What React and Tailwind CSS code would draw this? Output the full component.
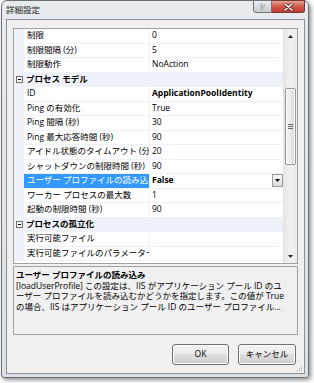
import React from "react";

const rows = [
  { name: "制限", value: "0" },
  { name: "制限間隔 (分)", value: "5" },
  { name: "制限動作", value: "NoAction" },
  { cat: "プロセス モデル" },
  { name: "ID", value: "ApplicationPoolIdentity", bold: true },
  { name: "Ping の有効化", value: "True" },
  { name: "Ping 間隔 (秒)", value: "30" },
  { name: "Ping 最大応答時間 (秒)", value: "90" },
  { name: "アイドル状態のタイムアウト (分)", value: "20" },
  { name: "シャットダウンの制限時間 (秒)", value: "90" },
  { name: "ユーザー プロファイルの読み込み", value: "False", bold: true, selected: true },
  { name: "ワーカー プロセスの最大数", value: "1" },
  { name: "起動の制限時間 (秒)", value: "90" },
  { cat: "プロセスの孤立化" },
  { name: "実行可能ファイル", value: "" },
  { name: "実行可能ファイルのパラメーター", value: "" },
];

function Minus() {
  return (
    <svg width="7" height="7" viewBox="0 0 7 7" className="block">
      <rect x="0.5" y="0.5" width="6" height="6" fill="#ffffff" stroke="#6f6f6f" />
      <line x1="2" y1="3.5" x2="5" y2="3.5" stroke="#000" />
    </svg>
  );
}

function Row({ r }) {
  if (r.cat) {
    return (
      <div className="h-[14.5px] flex items-center bg-[#eef1f7]">
        <div className="w-[10px] pl-[2px] flex items-center">
          <Minus />
        </div>
        <div className="pl-[2px] font-bold whitespace-nowrap">{r.cat}</div>
      </div>
    );
  }
  return (
    <div className="h-[14.5px] flex">
      <div className="w-[10px] bg-[#eef1f7]" />
      <div
        className={
          r.selected
            ? "w-[126px] border-r border-b border-[#eef1f7] bg-[#3399ff] text-white pl-[3px] flex items-center overflow-hidden whitespace-nowrap"
            : "w-[126px] border-r border-b border-[#eef1f7] pl-[3px] flex items-center overflow-hidden whitespace-nowrap"
        }
      >
        {r.name}
      </div>
      <div className="flex-1 border-b border-[#eef1f7] pl-[2px] flex items-center whitespace-nowrap overflow-hidden">
        <span className={r.bold ? "font-bold flex-1" : "flex-1"}>{r.value}</span>
        {r.selected && (
          <div className="w-[11px] h-[13px] border border-[#9b9b9b] bg-gradient-to-b from-[#f6f6f6] to-[#dcdcdc] flex items-center justify-center">
            <svg width="5" height="3" viewBox="0 0 5 3" className="block">
              <path d="M0 0 H5 L2.5 3 Z" fill="#000" />
            </svg>
          </div>
        )}
      </div>
    </div>
  );
}

export default function App() {
  return (
    <div className="w-[314px] h-[383px] bg-white overflow-hidden font-['Open_Sans','Noto_Sans_CJK_JP',sans-serif] text-[8.5px] text-black">
      <div className="ml-[1px] w-[308px] h-[378px] flex flex-col border border-[#6c6f74] rounded-t-[6px] rounded-b-[3px] bg-gradient-to-b from-[#e7eaee] to-[#dde0e5] shadow-[2px_2px_4px_rgba(0,0,0,0.45)]">
        {/* Title bar */}
        <div className="h-[18px] shrink-0 flex items-start">
          <div className="h-full pl-[4px] flex items-center text-[#222]">詳細設定</div>
          <div className="flex-1" />
          <div className="flex -mt-[1px] mr-[3px]">
            <div className="w-[19px] h-[13px] rounded-bl-[3px] border border-[#6f747c] bg-gradient-to-b from-[#eef0f3] via-[#d9dde2] to-[#c9cdd3] flex items-center justify-center font-bold text-[8px] text-white leading-none [text-shadow:0_0_1px_#333,0_0_1px_#333]">
              ?
            </div>
            <div className="w-[33px] h-[13px] rounded-br-[3px] border border-l-0 border-[#6f3a36] bg-gradient-to-b from-[#e8a194] via-[#d0594b] to-[#c4382c] flex items-center justify-center">
              <svg width="11" height="8" viewBox="0 0 11 8" className="block">
                <path d="M2 1 L9 7 M9 1 L2 7" stroke="#5a2a26" strokeWidth="3" strokeLinecap="round" />
                <path d="M2 1 L9 7 M9 1 L2 7" stroke="#ffffff" strokeWidth="1.6" strokeLinecap="round" />
              </svg>
            </div>
          </div>
        </div>

        {/* Client area */}
        <div className="relative ml-[4px] mr-[3px] mb-[3px] flex-1 border border-[#8b8e93] bg-[#f0f0f0] flex flex-col">
          {/* Property grid */}
          <div className="mt-[8px] mx-[6px] h-[236px] border border-[#a0a0a0] bg-white flex">
            <div className="flex-1 flex flex-col">
              {rows.map((r, i) => (
                <Row key={i} r={r} />
              ))}
            </div>
            {/* Scrollbar */}
            <div className="w-[14px] flex flex-col bg-gradient-to-r from-[#e6e6e6] via-[#f2f2f2] to-[#ebebeb] border-l border-[#e2e2e2]">
              <div className="h-[14px] flex items-center justify-center">
                <svg width="5" height="3" viewBox="0 0 5 3" className="block">
                  <path d="M0 3 H5 L2.5 0 Z" fill="#222" />
                </svg>
              </div>
              <div className="h-[45px]" />
              <div className="h-[77px] mx-[1px] rounded-[2px] border border-[#979797] bg-gradient-to-r from-[#f5f5f5] via-[#e9e9e9] to-[#d6d6d6] shadow-[inset_0_0_0_1px_#fbfbfb] flex flex-col items-center justify-center gap-[1px]">
                <div className="w-[5px] h-[1px] bg-[#6a6a6a]" />
                <div className="w-[5px] h-[1px] bg-[#6a6a6a]" />
                <div className="w-[5px] h-[1px] bg-[#6a6a6a]" />
              </div>
              <div className="flex-1" />
              <div className="h-[14px] flex items-center justify-center">
                <svg width="5" height="3" viewBox="0 0 5 3" className="block">
                  <path d="M0 0 H5 L2.5 3 Z" fill="#222" />
                </svg>
              </div>
            </div>
          </div>

          {/* Description */}
          <div className="mt-[2px] mx-[6px] h-[69px] border border-[#a0a0a0] bg-[#f0f0f0] pt-[3px] pl-[2px] leading-[10.5px] overflow-hidden whitespace-nowrap">
            <div className="font-bold">ユーザー プロファイルの読み込み</div>
            <div>[loadUserProfile] この設定は、IIS がアプリケーション プール ID のユ</div>
            <div>ーザー プロファイルを読み込むかどうかを指定します。この値が True</div>
            <div>の場合、IIS はアプリケーション プール ID のユーザー プロファイル...</div>
          </div>

          {/* Buttons */}
          <div className="mt-[9px] pr-[8px] flex justify-end gap-[9px]">
            <div className="w-[57px] h-[21px] rounded-[3px] border border-[#707070] bg-[linear-gradient(to_bottom,#f2f2f2_0%,#ebebeb_50%,#dddddd_50%,#cfcfcf_100%)] shadow-[inset_0_0_0_1px_#fbfbfb] flex items-center justify-center">
              OK
            </div>
            <div className="w-[58px] h-[21px] rounded-[3px] border border-[#707070] bg-[linear-gradient(to_bottom,#f2f2f2_0%,#ebebeb_50%,#dddddd_50%,#cfcfcf_100%)] shadow-[inset_0_0_0_1px_#fbfbfb] flex items-center justify-center">
              キャンセル
            </div>
          </div>

          {/* Resize grip */}
          <div className="absolute right-[1px] bottom-[1px]">
            <svg width="7" height="7" viewBox="0 0 7 7" className="block">
              <rect x="5" y="1" width="1" height="1" fill="#a8a8a8" />
              <rect x="3" y="3" width="1" height="1" fill="#a8a8a8" />
              <rect x="5" y="3" width="1" height="1" fill="#a8a8a8" />
              <rect x="1" y="5" width="1" height="1" fill="#a8a8a8" />
              <rect x="3" y="5" width="1" height="1" fill="#a8a8a8" />
              <rect x="5" y="5" width="1" height="1" fill="#a8a8a8" />
            </svg>
          </div>
        </div>
      </div>
    </div>
  );
}
